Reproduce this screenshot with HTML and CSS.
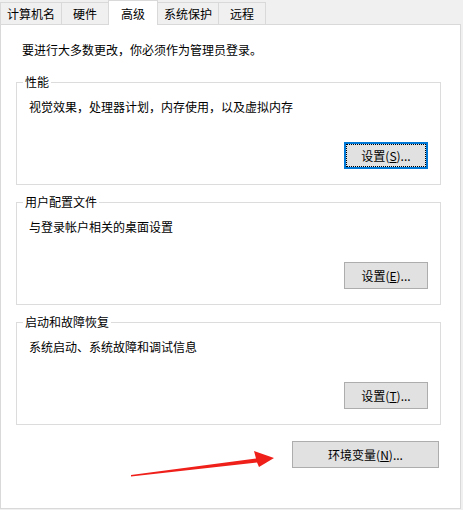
FILE: index.html
```html
<!DOCTYPE html>
<html lang="zh-CN">
<head>
  <meta charset="UTF-8">
  <title>系统属性 - 高级</title>
  <link rel="stylesheet" href="styles.css">
</head>
<body>
  <div class="dialog">
    <!-- 选项卡 -->
    <div class="tabs">
      <div class="tab">计算机名</div>
      <div class="tab">硬件</div>
      <div class="tab active">高级</div>
      <div class="tab">系统保护</div>
      <div class="tab">远程</div>
    </div>

    <div class="panel">
      <p class="notice">要进行大多数更改，你必须作为管理员登录。</p>

      <fieldset class="group first">
        <legend>性能</legend>
        <p>视觉效果，处理器计划，内存使用，以及虚拟内存</p>
        <div class="actions">
          <button class="btn focused">设置(<u>S</u>)...</button>
        </div>
      </fieldset>

      <fieldset class="group">
        <legend>用户配置文件</legend>
        <p>与登录帐户相关的桌面设置</p>
        <div class="actions">
          <button class="btn">设置(<u>E</u>)...</button>
        </div>
      </fieldset>

      <fieldset class="group">
        <legend>启动和故障恢复</legend>
        <p>系统启动、系统故障和调试信息</p>
        <div class="actions">
          <button class="btn">设置(<u>T</u>)...</button>
        </div>
      </fieldset>

      <div class="actions env">
        <button class="btn wide">环境变量(<u>N</u>)...</button>
      </div>
    </div>

    <!-- 标注箭头 -->
    <svg class="arrow" width="463" height="510" viewBox="0 0 463 510">
      <polygon points="131,475 256,458.5 254,451 274,458 259,467 257,462.5 131,476.5" fill="#ef1f1a"/>
    </svg>
  </div>
</body>
</html>
```

FILE: styles.css
```css
body {
  margin: 0;
  background-color: #f0f0f0;
  font-family: "Noto Sans CJK SC", "Noto Sans", sans-serif;
  font-size: 12px;
  color: #000;
}

.dialog {
  position: relative;
  width: 463px;
  height: 510px;
}

/* 选项卡 */
.tabs {
  display: flex;
  align-items: flex-end;
  height: 24px;
}

.tab {
  box-sizing: border-box;
  height: 22px;
  min-width: 48px;
  padding: 0 6px;
  margin-left: -1px;
  border: 1px solid #d9d9d9;
  border-bottom: none;
  background-color: #f0f0f0;
  text-align: center;
  line-height: 21px;
}

.tab:first-child {
  margin-left: 0;
}

.tab.active {
  position: relative;
  z-index: 1;
  height: 25px;
  min-width: 50px;
  margin-bottom: -1px;
  background-color: #fff;
  line-height: 25px;
}

/* 内容面板 */
.panel {
  box-sizing: border-box;
  width: 461px;
  height: 485px;
  padding: 17px 19px 0 15px;
  border: 1px solid #d9d9d9;
  background-color: #fff;
}

.notice {
  margin: 0 0 0 6px;
  line-height: 16px;
}

.group {
  margin: 9px 0 0;
  padding: 0 12px 15px 12px;
  min-width: 0;
  border: 1px solid #dcdcdc;
}

.group.first {
  margin-top: 16px;
}

.group legend {
  margin-left: -6px;
  padding: 0 2px;
  line-height: 16px;
}

.group p {
  margin: 9px 0 0;
  line-height: 16px;
}

.actions {
  display: flex;
  justify-content: flex-end;
  margin-top: 27px;
}

.actions.env {
  margin-top: 16px;
  margin-right: 2px;
}

.btn {
  box-sizing: border-box;
  width: 84px;
  height: 27px;
  padding: 0;
  border: 1px solid #adadad;
  background-color: #e1e1e1;
  color: #000;
  font-family: inherit;
  font-size: 12px;
}

.btn.focused {
  border: 2px solid #0078d7;
  outline: 1px dotted #000;
  outline-offset: -3px;
}

.btn.wide {
  width: 147px;
}

.arrow {
  position: absolute;
  top: 0;
  left: 0;
  pointer-events: none;
}
```
